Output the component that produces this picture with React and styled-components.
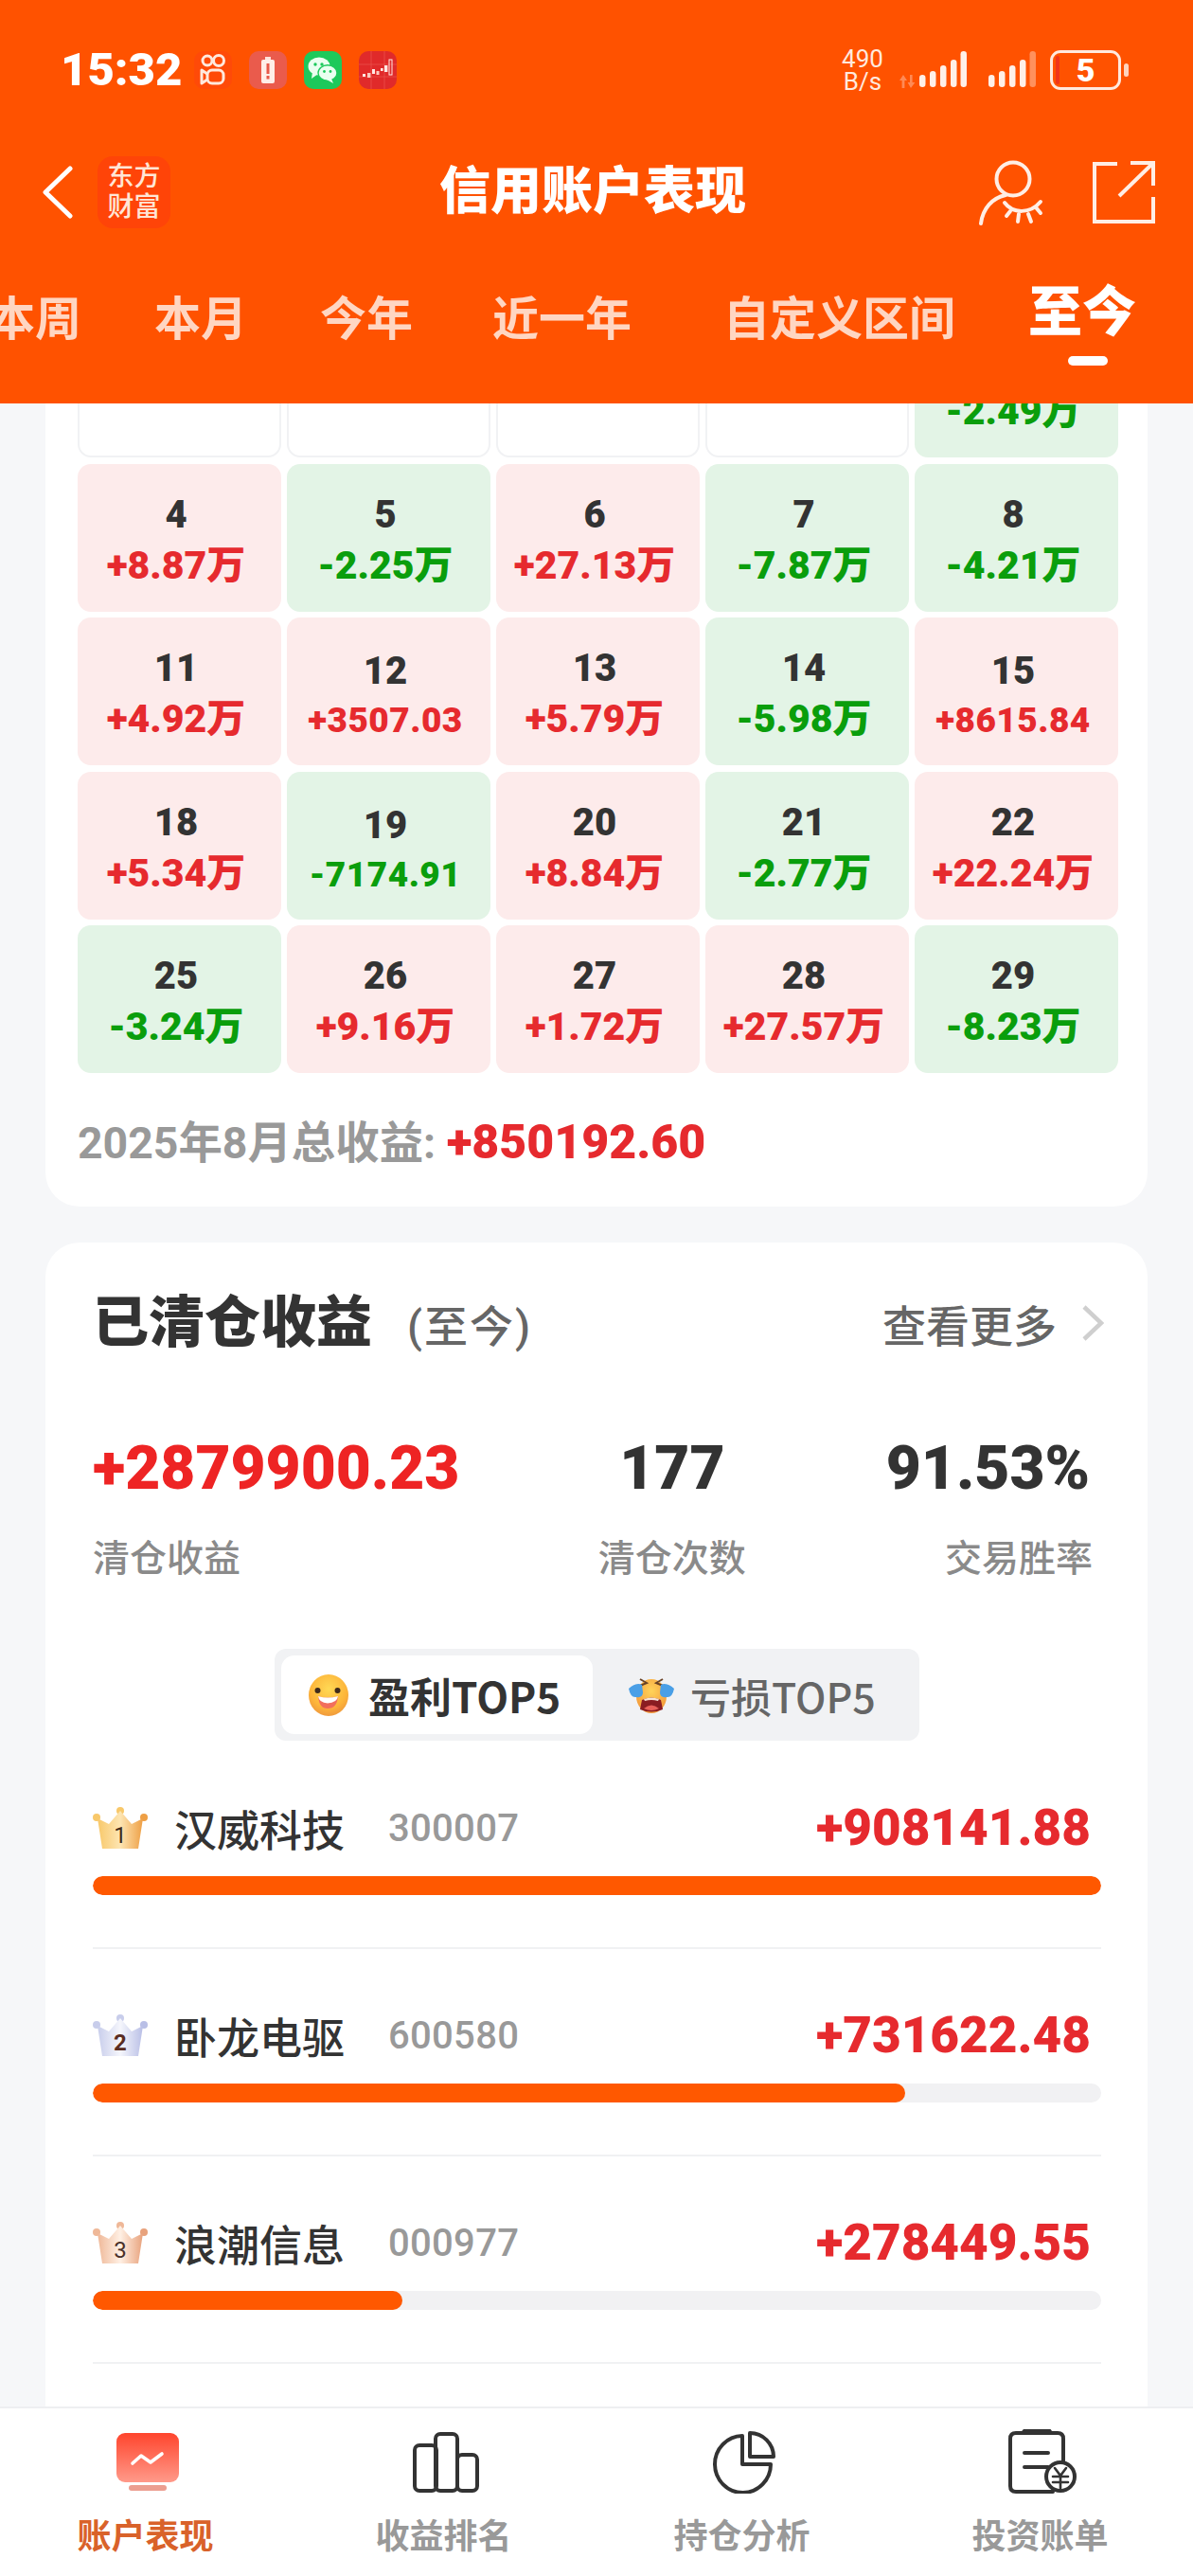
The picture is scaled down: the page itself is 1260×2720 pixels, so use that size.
import React from "react";
import styled, { createGlobalStyle } from "styled-components";

const GlobalStyle = createGlobalStyle`
  html, body {
    margin: 0;
    padding: 0;
    background: #f6f7f9;
  }
  * {
    box-sizing: border-box;
  }
`;

const Page = styled.div`
  width: 1260px;
  height: 2720px;
  display: flex;
  flex-direction: column;
  overflow: hidden;
  background: #f6f7f9;
  font-family: Roboto, "Noto Sans CJK SC", sans-serif;
  color: #333;
`;

/* header */
const Header = styled.header`
  flex: 0 0 426px;
  position: relative;
  z-index: 2;
  background: #ff5200;
  color: #fff;
  overflow: hidden;
`;
const StatusBar = styled.div`
  height: 52px;
  margin-top: 48px;
  padding: 0 76px 0 64px;
  display: flex;
  align-items: center;
`;
const Clock = styled.div`
  font-size: 49px;
  font-weight: 900;
  width: 141px;
  line-height: 50px;
`;
const NotifyIcons = styled.div`
  display: flex;
  gap: 18px;
  flex: 1;
`;
const NetSpeed = styled.div`
  width: 60px;
  font-size: 26px;
  line-height: 24px;
  text-align: center;
  color: #ffe9de;
  margin-right: 9px;
`;
const SignalSet = styled.div`
  display: flex;
  gap: 23px;
  margin-left: 4px;
`;
const Battery = styled.div`
  margin-left: 15px;
  width: 75px;
  height: 42px;
  border: 3px solid #ffe9de;
  border-radius: 11px;
  position: relative;
  display: flex;
  align-items: center;
  justify-content: center;
  font-size: 34px;
  font-weight: 900;
  &::before {
    content: "";
    position: absolute;
    left: 3px;
    top: 3px;
    bottom: 3px;
    width: 4px;
    border-radius: 2px;
    background: #f0341a;
  }
  &::after {
    content: "";
    position: absolute;
    right: -11px;
    top: 11px;
    width: 5px;
    height: 14px;
    border-radius: 3px;
    background: #ffd3bd;
  }
`;
const NavBar = styled.div`
  height: 92px;
  margin-top: 57px;
  padding: 0 40px 0 45px;
  position: relative;
  display: flex;
  align-items: center;
  justify-content: space-between;
`;
const NavLeft = styled.div`
  display: flex;
  align-items: center;
  gap: 26px;
`;
const NavRight = styled.div`
  display: flex;
  align-items: center;
  gap: 50px;
`;
const Logo = styled.div`
  width: 77px;
  height: 76px;
  border-radius: 16px;
  background: #ff4408;
  color: #ffe6d6;
  font-size: 28px;
  font-weight: 500;
  line-height: 32px;
  display: flex;
  align-items: center;
  justify-content: center;
  text-align: center;
`;
const Title = styled.h1`
  position: absolute;
  left: 464px;
  top: 12px;
  margin: 0;
  font-size: 54px;
  line-height: 68px;
  font-weight: 900;
`;
const Tabs = styled.div`
  margin: 49px 0 0 -12px;
  height: 80px;
  display: flex;
  align-items: center;
  gap: 77px;
  white-space: nowrap;
`;
const Tab = styled.div`
  position: relative;
  font-size: ${(p) => (p.$active ? 57 : 49)}px;
  font-weight: ${(p) => (p.$active ? 900 : 700)};
  color: ${(p) => (p.$active ? "#fff" : "#ffd6c2")};
  margin-left: ${(p) => p.$push || 0}px;
  top: ${(p) => (p.$active ? -8 : 0)}px;
  line-height: 70px;
  ${(p) =>
    p.$active &&
    `&::after {
      content: "";
      position: absolute;
      left: 42px;
      bottom: -21px;
      width: 42px;
      height: 10px;
      border-radius: 5px;
      background: #fff;
    }`}
`;

/* scrolled content */
const Content = styled.main`
  flex: 1;
  min-height: 0;
  overflow: hidden;
  padding: 0 48px;
  position: relative;
`;
const Card = styled.section`
  background: #fff;
  border-radius: 36px;
`;
const CalendarCard = styled(Card)`
  margin-top: -139px;
  padding: 40px 34px;
  height: 987px;
`;
const Grid = styled.div`
  display: grid;
  grid-template-columns: repeat(5, 215px);
  grid-auto-rows: 156px;
  column-gap: 6px;
  row-gap: 6.5px;
`;
const Cell = styled.div`
  border-radius: 14px;
  display: flex;
  flex-direction: column;
  align-items: center;
  background: ${(p) =>
    p.$kind === "up" ? "#fdebeb" : p.$kind === "down" ? "#e3f4e6" : "#fff"};
  border: ${(p) => (p.$kind ? "none" : "2px solid #f1f2f4")};
  padding: ${(p) => (p.$small ? 32 : 29)}px 7px 0 0;
`;
const Day = styled.div`
  font-size: 40px;
  font-weight: 900;
  line-height: 50px;
  color: #333;
`;
const Amount = styled.div`
  font-size: ${(p) => (p.$small ? 37 : 41)}px;
  font-weight: 900;
  line-height: 54px;
  margin-top: ${(p) => (p.$small ? 0 : 1)}px;
  letter-spacing: ${(p) => (p.$small ? 0.5 : 0)}px;
  white-space: nowrap;
  color: ${(p) => (p.$kind === "up" ? "#e62a2e" : "#0a9e0c")};
`;
const MonthTotal = styled.div`
  margin-top: 45px;
  font-size: 46.4px;
  line-height: 56px;
  font-weight: 700;
  color: #999;
  span {
    color: #e62a2e;
    font-size: 50px;
    font-weight: 900;
  }
`;

const ClearedCard = styled(Card)`
  margin-top: 38px;
  padding: 48px 49px 140px 50px;
`;
const CardHead = styled.div`
  display: flex;
  align-items: center;
  height: 74px;
`;
const CardTitle = styled.h2`
  margin: 0;
  font-size: 59px;
  line-height: 74px;
  font-weight: 900;
  color: #333;
`;
const CardSub = styled.span`
  margin-left: 37px;
  font-size: 46px;
  font-weight: 500;
  letter-spacing: 2px;
  color: #666;
  flex: 1;
`;
const More = styled.div`
  display: flex;
  align-items: center;
  gap: 26px;
  margin-right: -3px;
  font-size: 46px;
  font-weight: 500;
  color: #666;
`;
const Stats = styled.div`
  margin: 82px 9px 0 0;
  display: grid;
  grid-template-columns: 480px 1fr auto;
`;
const Stat = styled.div`
  display: flex;
  flex-direction: column;
  align-items: ${(p) => p.$align || "flex-start"};
  ${(p) => p.$pad && `padding-right: ${p.$pad}px;`}
`;
const StatValue = styled.div`
  font-size: 64px;
  line-height: 70px;
  font-weight: 900;
  margin-right: ${(p) => p.$inset || 0}px;
  color: ${(p) => (p.$red ? "#ee2424" : "#333")};
`;
const StatLabel = styled.div`
  margin-top: 34px;
  font-size: 39px;
  line-height: 52px;
  font-weight: 500;
  color: #8a8a8a;
`;
const Segment = styled.div`
  margin: 69px auto 0 auto;
  width: 681px;
  height: 97px;
  padding: 7px;
  border-radius: 12px;
  background: #f1f2f4;
  display: flex;
  font-family: "Noto Sans CJK SC", sans-serif;
`;
const SegmentItem = styled.div`
  width: ${(p) => (p.$active ? 329 : 338)}px;
  height: 83px;
  border-radius: 14px;
  background: ${(p) => (p.$active ? "#fff" : "transparent")};
  display: flex;
  align-items: center;
  padding-left: ${(p) => (p.$active ? 28 : 38)}px;
  gap: ${(p) => (p.$active ? 20 : 17)}px;
  font-size: ${(p) => (p.$active ? 44 : 43)}px;
  font-weight: ${(p) => (p.$active ? 700 : 500)};
  color: ${(p) => (p.$active ? "#333" : "#666")};
`;
const RankList = styled.div`
  margin-top: 1px;
`;
const Rank = styled.div`
  border-bottom: 2px solid #f0f1f3;
  height: 219px;
  padding-top: 55px;
`;
const RankRow = styled.div`
  display: flex;
  align-items: center;
  height: 72px;
`;
const Name = styled.div`
  margin-left: 28px;
  width: 226px;
  font-size: 45px;
  font-weight: 500;
  color: #333;
`;
const Code = styled.div`
  font-size: 40px;
  font-weight: 500;
  letter-spacing: 0.3px;
  color: #999;
  flex: 1;
`;
const Profit = styled.div`
  font-size: 53px;
  font-weight: 900;
  margin-right: 11px;
  color: #e62a2e;
`;
const Track = styled.div`
  margin-top: 15px;
  height: 20px;
  border-radius: 10px;
  background: #f1f1f3;
  overflow: hidden;
`;
const Fill = styled.div`
  height: 100%;
  border-radius: 10px;
  background: #ff5800;
`;

/* bottom tabs */
const TabBar = styled.nav`
  flex: 0 0 179px;
  position: relative;
  z-index: 2;
  background: #fff;
  border-top: 2px solid #eeeff1;
  display: grid;
  grid-template-columns: repeat(4, 315px);
  margin-left: -4px;
  padding-top: 21px;
`;
const TabItem = styled.div`
  display: flex;
  flex-direction: column;
  align-items: center;
`;
const TabIcon = styled.div`
  height: 72px;
  margin-left: 5px;
  display: flex;
  align-items: center;
  justify-content: center;
`;
const TabLabel = styled.div`
  margin-top: 18px;
  font-size: 36px;
  line-height: 50px;
  font-weight: 700;
  color: ${(p) => (p.$active ? "#d9622a" : "#999")};
`;

/* status bar drawings */
const AppBadge = styled.div`
  width: 40px;
  height: 40px;
  border-radius: 10px;
  background: ${(p) => p.$bg};
  display: flex;
  align-items: center;
  justify-content: center;
`;

const KuaishouIcon = () => (
  <svg width="30" height="34" viewBox="0 0 30 34" fill="none" stroke="#ffe9de" strokeWidth="3">
    <circle cx="9" cy="7" r="5" />
    <circle cx="21" cy="7" r="5.5" />
    <rect x="9" y="17" width="17" height="14" rx="5" />
    <path d="M9 21 L3 17 V31 L9 27" strokeLinejoin="round" />
  </svg>
);
const BatteryWarn = () => (
  <svg width="16" height="28" viewBox="0 0 16 28">
    <rect x="5" y="0" width="6" height="3" fill="#ffe2da" />
    <rect x="1" y="3" width="14" height="25" rx="2" fill="#ffeee9" />
    <rect x="6.5" y="7" width="3" height="11" fill="#e8584a" />
    <rect x="6.5" y="20" width="3" height="3.5" fill="#e8584a" />
  </svg>
);
const WechatIcon = () => (
  <svg width="32" height="28" viewBox="0 0 32 28">
    <ellipse cx="12" cy="10" rx="11.5" ry="9.5" fill="#eafff0" />
    <path d="M5 16 L4 23 L11 18 Z" fill="#eafff0" />
    <ellipse cx="21" cy="17" rx="10" ry="8.2" fill="#eafff0" stroke="#1dc95b" strokeWidth="1.4" />
    <path d="M25 23 L27 28 L20 24 Z" fill="#eafff0" />
    <circle cx="8" cy="8" r="1.7" fill="#1dc95b" />
    <circle cx="15" cy="8" r="1.7" fill="#1dc95b" />
    <circle cx="17.5" cy="15.5" r="1.4" fill="#1dc95b" />
    <circle cx="24" cy="15.5" r="1.4" fill="#1dc95b" />
  </svg>
);
const StockIcon = () => (
  <svg width="40" height="40" viewBox="0 0 40 40">
    <path d="M0 14 H40 M0 27 H40 M13 0 V40 M27 0 V40" stroke="#ee5a55" strokeWidth="0.6" />
    <rect x="4" y="24" width="3" height="3" fill="#ffe9e4" />
    <rect x="9" y="23" width="3.4" height="5" fill="#ffc9c0" />
    <rect x="14" y="19" width="3" height="5" fill="#ffe9e4" />
    <rect x="18.5" y="21" width="3" height="4" fill="#ffc9c0" />
    <rect x="23" y="18" width="2.6" height="3" fill="#ffe9e4" />
    <rect x="27" y="15" width="3.4" height="7" fill="#ffe9e4" />
    <rect x="32" y="9" width="3" height="16" fill="none" stroke="#ffe9e4" strokeWidth="1" />
  </svg>
);
const Signal = ({ dimLast }) => (
  <svg width="50" height="40" viewBox="0 0 50 40" fill="#fff0e8">
    <rect x="0" y="25" width="6.5" height="13" rx="3.2" />
    <rect x="11" y="21" width="6.5" height="17" rx="3.2" />
    <rect x="22" y="15" width="6.5" height="23" rx="3.2" />
    <rect x="33" y="9" width="6.5" height="29" rx="3.2" />
    <rect x="43.5" y="0" width="6.5" height="38" rx="3.2" opacity={dimLast ? 0.4 : 1} />
  </svg>
);
const UpDown = () => (
  <svg width="17" height="14" viewBox="0 0 17 14" fill="#ff8a55" style={{ marginTop: 24 }}>
    <path d="M4 0 L8 6 H5.4 V14 H2.6 V6 H0 Z" />
    <path d="M12 14 L8.6 8 H11 V0 H13.6 V8 H16.4 Z" />
  </svg>
);

/* nav icons */
const BackIcon = () => (
  <svg width="32" height="56" viewBox="0 0 32 56" fill="none" stroke="#fff" strokeWidth="5" strokeLinecap="round" strokeLinejoin="round">
    <path d="M29 3 L3 28 L29 53" />
  </svg>
);
const EyeUserIcon = () => (
  <svg width="70" height="70" viewBox="0 0 70 70" fill="none" stroke="#ffeee5" strokeWidth="4" strokeLinecap="round">
    <circle cx="36" cy="21" r="17.5" />
    <path d="M2 68 C4 52 14 41 28 38" />
    <path d="M27 46 C36 58 54 58 65 45" />
    <path d="M33 55 L29 60 M42 58 L41 66 M52 58 L55 66 M60 51 L65 57" />
  </svg>
);
const ShareIcon = () => (
  <svg width="66" height="66" viewBox="0 0 66 66" fill="none" stroke="#ffeee5" strokeWidth="4">
    <path d="M26 3 H2 V64 H64 V38" />
    <path d="M28 37 L63 3" />
    <path d="M40 2 H64 V26" />
  </svg>
);

const ChevronRight = () => (
  <svg width="24" height="38" viewBox="0 0 24 38" fill="none" stroke="#cfcfcf" strokeWidth="4.5" strokeLinejoin="miter">
    <path d="M3 2 L21 19 L3 36" />
  </svg>
);

/* emoji */
const SmileFace = () => (
  <svg width="44" height="44" viewBox="0 0 44 44">
    <defs>
      <radialGradient id="smileBg" cx="50%" cy="35%" r="65%">
        <stop offset="0%" stopColor="#ffd955" />
        <stop offset="70%" stopColor="#fdb53a" />
        <stop offset="100%" stopColor="#f09a3c" />
      </radialGradient>
    </defs>
    <ellipse cx="22" cy="22" rx="21" ry="22" fill="url(#smileBg)" />
    <circle cx="10.5" cy="17" r="3" fill="#3f2a1c" />
    <circle cx="31.5" cy="17" r="3" fill="#3f2a1c" />
    <path d="M11 23 Q21 26 32 23 Q31 36 21 36 Q12 36 11 23 Z" fill="#f26f5c" />
    <path d="M11 23 Q21 26 32 23 Q31 30 21 30.5 Q12 30 11 23 Z" fill="#fff" />
  </svg>
);
const CryLaughFace = () => (
  <svg width="48" height="40" viewBox="0 0 48 40">
    <defs>
      <radialGradient id="cryBg" cx="50%" cy="35%" r="65%">
        <stop offset="0%" stopColor="#ffd35a" />
        <stop offset="100%" stopColor="#f4993a" />
      </radialGradient>
    </defs>
    <ellipse cx="24" cy="21" rx="16" ry="18" fill="url(#cryBg)" />
    <path d="M12 3 L19 7 L12 10" stroke="#6a4326" strokeWidth="2" fill="none" />
    <path d="M36 3 L29 7 L36 10" stroke="#6a4326" strokeWidth="2" fill="none" />
    <path d="M14 25 Q24 20 34 25 L36 35 Q24 40 12 35 Z" fill="#8a1c22" />
    <path d="M16 34 Q24 27 32 34 Q24 38 16 34 Z" fill="#e9605a" />
    <path d="M16 24 Q24 21 32 24 L31 26 Q24 24 17 26 Z" fill="#f6e4d6" />
    <path d="M0 13 Q8 6 14 9 L15 17 Q15 23 8 22 Q2 23 0 13 Z" fill="#4a9fe6" />
    <path d="M48 13 Q40 6 34 9 L33 17 Q33 23 40 22 Q46 23 48 13 Z" fill="#4a9fe6" />
  </svg>
);

const crownColors = {
  1: ["#f8c86a", "#fde5b2", "#ee9f45", "#3f2a18", 400],
  2: ["#c8cdeb", "#f5f6fc", "#b9bfe6", "#5a2d22", 700],
  3: ["#efb898", "#fff0e4", "#e8a27c", "#4a3028", 400],
};
const Crown = ({ n }) => {
  const [left, mid, right, ink, weight] = crownColors[n];
  return (
    <svg width="58" height="44" viewBox="0 0 58 44" style={{ flex: "none" }}>
      <defs>
        <linearGradient id={`crown${n}`} x1="0" x2="1" y1="0" y2="0">
          <stop offset="0%" stopColor={left} />
          <stop offset="50%" stopColor={mid} />
          <stop offset="100%" stopColor={right} />
        </linearGradient>
      </defs>
      <circle cx="4" cy="11" r="4" fill={left} />
      <circle cx="29" cy="4" r="4" fill={left} />
      <circle cx="54" cy="11" r="4" fill={right} />
      <path d="M10 44 L5 12 L17 18 L29 4 L41 18 L53 12 L48 44 Z" fill={`url(#crown${n})`} />
      <text x="29" y="38" textAnchor="middle" fontSize="24" fontWeight={weight} fontFamily="Roboto, sans-serif" fill={ink}>
        {n}
      </text>
    </svg>
  );
};

/* tab bar icons */
const PerfIcon = () => (
  <svg width="66" height="62" viewBox="0 0 66 62">
    <defs>
      <linearGradient id="perfBg" x1="0" x2="0" y1="0" y2="1">
        <stop offset="0%" stopColor="#ff452d" />
        <stop offset="100%" stopColor="#ff9a8a" />
      </linearGradient>
    </defs>
    <rect x="0" y="0" width="66" height="52" rx="9" fill="url(#perfBg)" />
    <rect x="13" y="55" width="40" height="6" rx="3" fill="#ec9e90" />
    <path d="M17 32 L26 24 L36 31 L48 22" fill="none" stroke="#fff" strokeWidth="3.6" strokeLinecap="round" strokeLinejoin="round" />
  </svg>
);
const RankIcon = () => (
  <svg width="70" height="64" viewBox="0 0 70 64" fill="none" stroke="#333" strokeWidth="4" strokeLinejoin="round">
    <rect x="2" y="14" width="23" height="48" rx="5" />
    <rect x="24" y="2" width="23" height="60" rx="5" />
    <rect x="47" y="24" width="21" height="38" rx="5" />
  </svg>
);
const PieIcon = () => (
  <svg width="66" height="66" viewBox="0 0 66 66" fill="none" stroke="#333" strokeWidth="4" strokeLinejoin="round">
    <path d="M31 5 A29.5 30 0 1 0 61 35 H31 Z" />
    <path d="M39 2 A25 25 0 0 1 64 27 H39 Z" />
  </svg>
);
const BillIcon = () => (
  <svg width="72" height="70" viewBox="0 0 72 70" fill="none" stroke="#333" strokeWidth="4" strokeLinecap="round">
    <path d="M47 66 H8 Q2 66 2 60 V10 Q2 4 8 4 H52 Q58 4 58 10 V36" />
    <path d="M16 3 Q17 1 20 1 H40 Q44 1 44 3 Z" fill="#333" />
    <path d="M17 25 H42 M17 40 H42" />
    <circle cx="55" cy="50" r="15" fill="#fff" />
    <path d="M49 41 L55 49 L61 41 M47 50 H63 M47 56 H63 M55 49 V62" strokeWidth="2.6" />
  </svg>
);

const calendar = [
  [null, null, null, null, [1, "-2.49万"]],
  [[4, "+8.87万"], [5, "-2.25万"], [6, "+27.13万"], [7, "-7.87万"], [8, "-4.21万"]],
  [[11, "+4.92万"], [12, "+3507.03"], [13, "+5.79万"], [14, "-5.98万"], [15, "+8615.84"]],
  [[18, "+5.34万"], [19, "-7174.91"], [20, "+8.84万"], [21, "-2.77万"], [22, "+22.24万"]],
  [[25, "-3.24万"], [26, "+9.16万"], [27, "+1.72万"], [28, "+27.57万"], [29, "-8.23万"]],
];

const ranks = [
  { n: 1, name: "汉威科技", code: "300007", profit: 908141.88 },
  { n: 2, name: "卧龙电驱", code: "600580", profit: 731622.48 },
  { n: 3, name: "浪潮信息", code: "000977", profit: 278449.55 },
];

const bottomTabs = [
  { label: "账户表现", icon: <PerfIcon />, active: true },
  { label: "收益排名", icon: <RankIcon /> },
  { label: "持仓分析", icon: <PieIcon /> },
  { label: "投资账单", icon: <BillIcon /> },
];

function App() {
  return (
    <Page>
      <GlobalStyle />
      <Header>
        <StatusBar>
          <Clock>15:32</Clock>
          <NotifyIcons>
            <AppBadge $bg="#ff4a08"><KuaishouIcon /></AppBadge>
            <AppBadge $bg="#ea5b4c"><BatteryWarn /></AppBadge>
            <AppBadge $bg="#1dc95b"><WechatIcon /></AppBadge>
            <AppBadge $bg="#e02a2a"><StockIcon /></AppBadge>
          </NotifyIcons>
          <NetSpeed>490<br />B/s</NetSpeed>
          <UpDown />
          <SignalSet>
            <Signal />
            <Signal dimLast />
          </SignalSet>
          <Battery>5</Battery>
        </StatusBar>
        <NavBar>
          <NavLeft>
            <BackIcon />
            <Logo>东方<br />财富</Logo>
          </NavLeft>
          <Title>信用账户表现</Title>
          <NavRight>
            <EyeUserIcon />
            <ShareIcon />
          </NavRight>
        </NavBar>
        <Tabs>
          <Tab>本周</Tab>
          <Tab>本月</Tab>
          <Tab>今年</Tab>
          <Tab $push={7}>近一年</Tab>
          <Tab $push={20}>自定义区间</Tab>
          <Tab $active>至今</Tab>
        </Tabs>
      </Header>

      <Content>
        <CalendarCard>
          <Grid>
            {calendar.flat().map((c, i) => {
              if (!c) return <Cell key={i} />;
              const [day, value] = c;
              const kind = value[0] === "+" ? "up" : "down";
              const small = !value.includes("万");
              return (
                <Cell key={i} $kind={kind} $small={small}>
                  <Day>{day}</Day>
                  <Amount $kind={kind} $small={small}>{value}</Amount>
                </Cell>
              );
            })}
          </Grid>
          <MonthTotal>2025年8月总收益: <span>+850192.60</span></MonthTotal>
        </CalendarCard>

        <ClearedCard>
          <CardHead>
            <CardTitle>已清仓收益</CardTitle>
            <CardSub>(至今)</CardSub>
            <More>查看更多<ChevronRight /></More>
          </CardHead>
          <Stats>
            <Stat>
              <StatValue $red>+2879900.23</StatValue>
              <StatLabel>清仓收益</StatLabel>
            </Stat>
            <Stat $align="center" $pad={94}>
              <StatValue>177</StatValue>
              <StatLabel>清仓次数</StatLabel>
            </Stat>
            <Stat $align="flex-end">
              <StatValue $inset={3}>91.53%</StatValue>
              <StatLabel>交易胜率</StatLabel>
            </Stat>
          </Stats>
          <Segment>
            <SegmentItem $active><SmileFace />盈利TOP5</SegmentItem>
            <SegmentItem><CryLaughFace />亏损TOP5</SegmentItem>
          </Segment>
          <RankList>
            {ranks.map((r) => (
              <Rank key={r.n}>
                <RankRow>
                  <Crown n={r.n} />
                  <Name>{r.name}</Name>
                  <Code>{r.code}</Code>
                  <Profit>+{r.profit.toFixed(2)}</Profit>
                </RankRow>
                <Track>
                  <Fill style={{ width: `${(r.profit / ranks[0].profit) * 100}%` }} />
                </Track>
              </Rank>
            ))}
          </RankList>
        </ClearedCard>
      </Content>

      <TabBar>
        {bottomTabs.map((t) => (
          <TabItem key={t.label}>
            <TabIcon>{t.icon}</TabIcon>
            <TabLabel $active={t.active}>{t.label}</TabLabel>
          </TabItem>
        ))}
      </TabBar>
    </Page>
  );
}

export default App;
